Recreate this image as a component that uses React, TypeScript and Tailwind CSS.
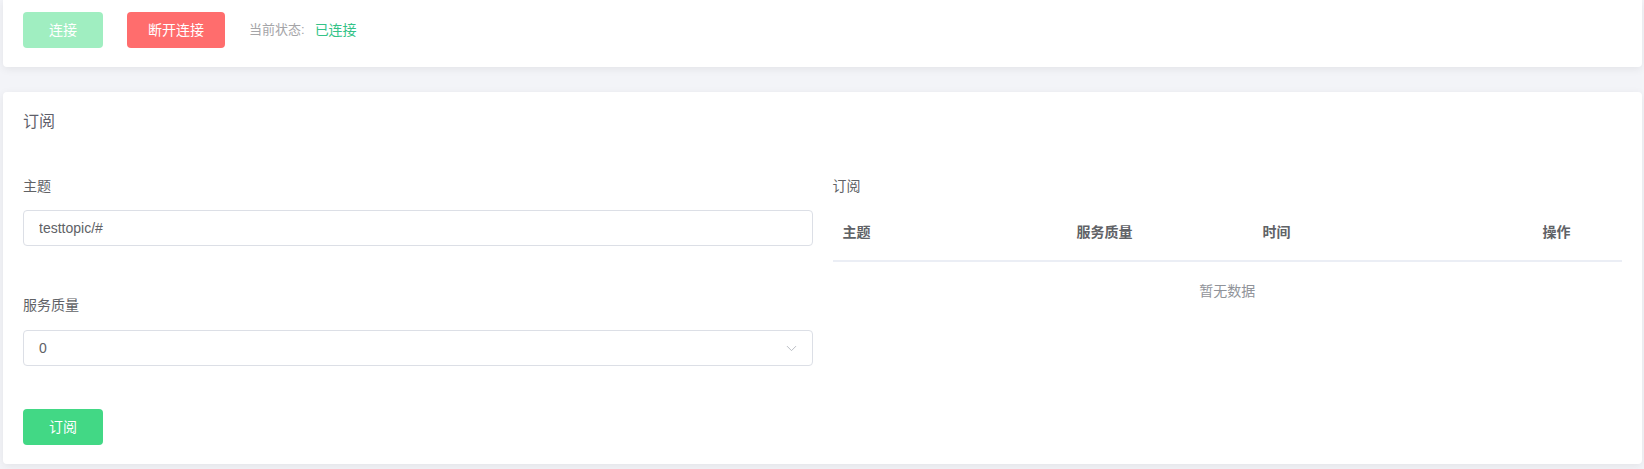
import { ChevronDown } from "lucide-react";

const cjk = { fontFamily: '"Liberation Sans", "Noto Sans CJK SC", sans-serif' };

function ConnectionBar() {
  return (
    <div className="bg-white rounded-b-[4px] shadow-[0_2px_8px_rgba(0,0,0,0.07)] h-[67px] px-5 pt-3 flex items-start gap-6">
      <button
        disabled
        className="w-20 h-9 rounded-[4px] bg-[#a0eec1] text-white text-[14px]"
      >
        连接
      </button>
      <button className="w-[98px] h-9 rounded-[4px] bg-[#ff6d6d] text-white text-[14px]">
        断开连接
      </button>
      <div className="h-9 flex items-center text-[13px]">
        <span className="text-[#a5a5a8]">当前状态:</span>
        <span className="ml-[10px] text-[#34c388] text-[14px]">已连接</span>
      </div>
    </div>
  );
}

function SubscribeForm() {
  return (
    <div className="flex-1 min-w-0 pt-11">
      <div className="h-5 leading-5 text-[14px] text-[#606266]">主题</div>
      <input
        defaultValue="testtopic/#"
        className="mt-[14px] w-full h-9 rounded-[4px] border border-[#dcdfe6] px-[15px] text-[14px] text-[#606266] outline-none"
      />
      <div className="mt-[49px] h-5 leading-5 text-[14px] text-[#606266]">服务质量</div>
      <div className="mt-[15px] w-full h-9 rounded-[4px] border border-[#dcdfe6] pl-[15px] pr-[12px] flex items-center justify-between">
        <span className="text-[14px] text-[#606266]">0</span>
        <ChevronDown size={17} strokeWidth={1.3} className="text-[#b4b7bf]" />
      </div>
      <button className="mt-[43px] w-20 h-9 rounded-[4px] bg-[#42d885] text-white text-[14px]">
        订阅
      </button>
    </div>
  );
}

function SubscriptionTable() {
  return (
    <div className="flex-1 min-w-0 pt-11">
      <div className="h-5 leading-5 text-[14px] text-[#606266]">订阅</div>
      <div className="mt-[10px] h-[56px] pb-[2px] grid grid-cols-[234px_186px_280px_1fr] items-center border-b-2 border-[#ebeef5] text-[14px] font-bold text-[#606266]">
        <div className="px-[10px]">主题</div>
        <div className="px-[10px]">服务质量</div>
        <div className="px-[10px]">时间</div>
        <div className="px-[10px]">操作</div>
      </div>
      <div className="h-[58px] leading-[58px] text-center text-[14px] text-[#909399]">暂无数据</div>
    </div>
  );
}

export default function App() {
  return (
    <div className="w-[1644px] h-[469px] bg-[#f3f4f8] pl-[3px] pr-[2px] overflow-hidden" style={cjk}>
      <ConnectionBar />
      <div className="mt-[25px] bg-white rounded-[4px] shadow-[0_2px_8px_rgba(0,0,0,0.07)] h-[372px] px-5 pt-5">
        <div className="h-5 leading-5 text-[16px] text-[#5f5f6b]">订阅</div>
        <div className="flex gap-5">
          <SubscribeForm />
          <SubscriptionTable />
        </div>
      </div>
    </div>
  );
}
